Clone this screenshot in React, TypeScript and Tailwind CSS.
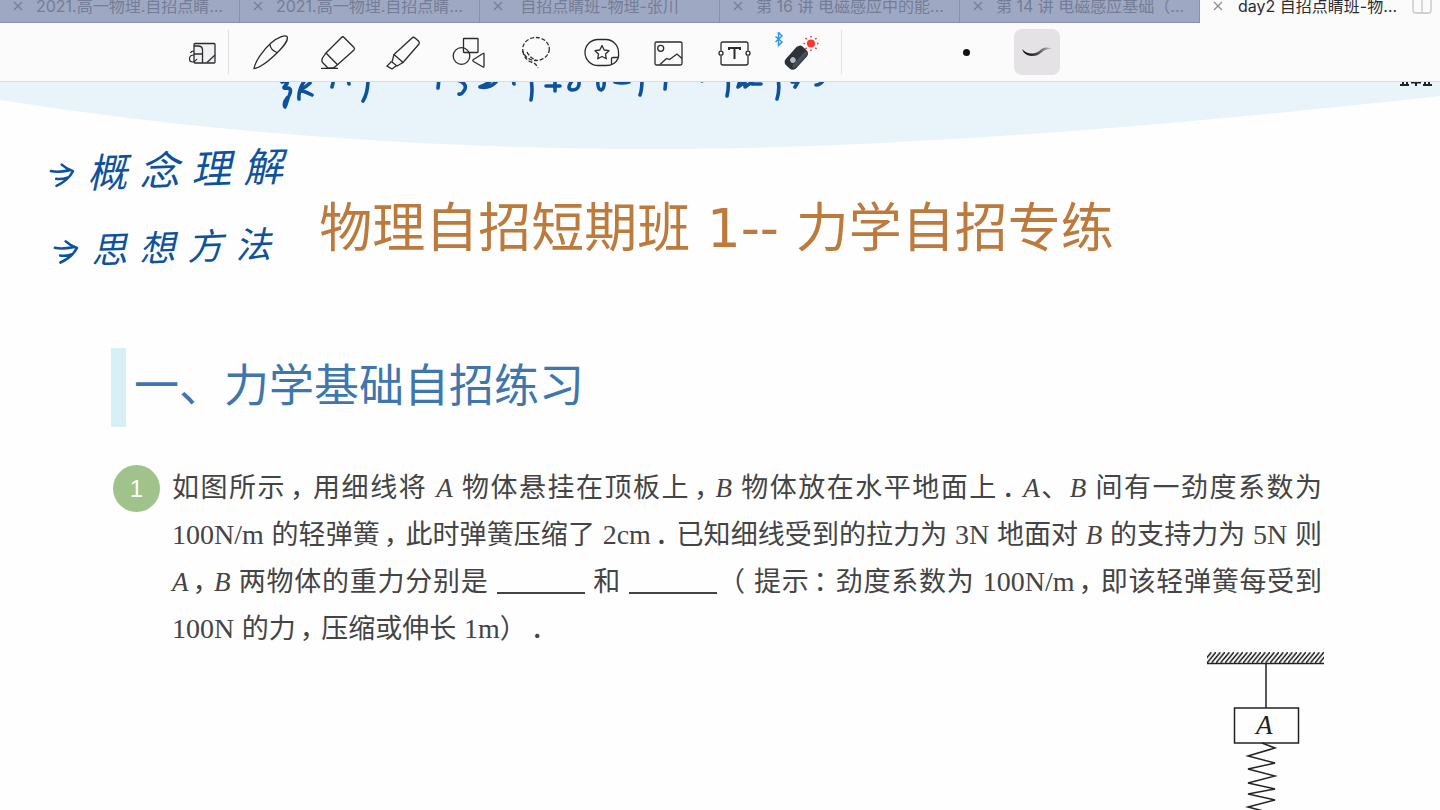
import React from 'react';

const CJK = "font-['Inter','Noto_Sans_CJK_SC',sans-serif]";

const TABS = [
  { title: '2021.高一物理.自招点睛…' },
  { title: '2021.高一物理.自招点睛…' },
  { title: '自招点睛班-物理-张川', short: true },
  { title: '第 16 讲 电磁感应中的能…' },
  { title: '第 14 讲 电磁感应基础（…' },
];

const CloseIcon = () => (
  <svg className="w-2.5 h-2.5" fill="none" stroke="currentColor" strokeWidth="1.2" viewBox="0 0 10 10"><path d="M1 1l8 8M9 1l-8 8" /></svg>
);

const TOOLS: { label: string; icon: React.ReactNode }[] = [
  {
    label: 'Pen',
    icon: <path d="M2 36.500C3 30 11 18 19 11C26 5 33 3 35 4.500C36.500 7 33 13 27 19C19 27 8 36 2 36.500ZM18 12.500Q18.500 18 25 20.500" />,
  },
  {
    label: 'Eraser',
    icon: <path d="M23.500 5.500Q24.700 4 26 5.500L36 15.500Q37 17 36 18L19.500 32.700L15.500 36H10L5 31Q3 29 4.500 26L8 21ZM8 21L19.500 32.700M3 36.400H20" />,
  },
  {
    label: 'Highlighter',
    icon: <path d="M28 6Q29.300 4.500 31 6L34.500 9Q36 10.500 35 12L19 30.500L10 22.500ZM10 22.500L8 30L13 34L19 30.500M7.500 29.500L3 34L8 37L12 34" />,
  },
  {
    label: 'Shapes',
    icon: (
      <>
        <rect x="13.500" y="6.500" width="14.500" height="14" rx="0.500" />
        <circle cx="11.500" cy="24" r="8.300" />
        <path d="M23.500 27.500L33 21.500Q34 21 34 22V34Q34 35.500 33 35L23.500 29.500Q22 28.500 23.500 27.500Z" />
      </>
    ),
  },
  {
    label: 'Lasso',
    icon: (
      <g strokeDasharray="4 1.800">
        <ellipse cx="20" cy="17" rx="13.300" ry="11.500" />
        <path d="M6.800 19Q8 27 15 30Q20 31 22 36M11 20Q14 26 20 28" />
      </g>
    ),
  },
  {
    label: 'Sticker',
    icon: (
      <>
        <path d="M16 7.500H24A13 13 0 0 1 36.500 20Q37 24 36 26.500Q33 33.500 24 33.500H16A13 13 0 0 1 16 7.500Z" />
        <path d="M36 25.500H31Q29.500 25.500 29.500 27V32" />
        <path d="M20 13.500L22.200 18L27 18.700L23.500 22L24.300 26.800L20 24.500L15.700 26.800L16.500 22L13 18.700L17.800 18Z" strokeLinejoin="round" />
      </>
    ),
  },
  {
    label: 'Image',
    icon: (
      <>
        <rect x="7" y="10" width="27" height="23" rx="1.500" />
        <circle cx="12.700" cy="16.300" r="3" />
        <path d="M12 32.500L18.500 26.500L21.500 27.500L29 22L34 26.500" />
      </>
    ),
  },
  {
    label: 'Text',
    icon: (
      <>
        <path d="M7 18.500V12Q7 10 9 10H32Q34 10 34 12V18.500M34 24V31Q34 33 32 33H9Q7 33 7 31V24" />
        <circle cx="7" cy="21.200" r="2" />
        <circle cx="34" cy="21.200" r="2" />
        <path d="M15 18V16H26V18M20.500 16V27" strokeWidth="2" />
      </>
    ),
  },
];

// Half-width marks centred in a full-width cell
const Mark = ({ children }: { children: React.ReactNode }) => (
  <span className="inline-block pl-1 pr-2 [font-feature-settings:'halt']">{children}</span>
);

const Blank = () => <span className="inline-block w-[88px] border-b-2 border-[#444] align-[-3px]" />;

const Latin = ({ children }: { children: React.ReactNode }) => (
  <span className="font-['Liberation_Serif',serif] text-[28px]">{children}</span>
);

const Var = ({ children }: { children: React.ReactNode }) => (
  <i className="font-['Liberation_Serif',serif]">{children}</i>
);

// Double-stroked arrow in front of each handwritten note
const NoteArrow = () => (
  <svg className="w-[26px] h-[26px] shrink-0" viewBox="0 0 26 26" fill="none" stroke="currentColor" strokeWidth="2.600" strokeLinecap="round" strokeLinejoin="round">
    <path d="M2 9Q9 11 20 9M7 17Q12 18 19 16M13 3Q17 7 24 10Q19 19 7 24" />
  </svg>
);

const Spring = () => (
  <svg className="w-[117px] h-[180px] shrink-0" viewBox="0 0 117 180" fill="none" stroke="#222" strokeWidth="1.500">
    <defs>
      <pattern id="hatch" width="4.500" height="11" patternUnits="userSpaceOnUse">
        <path d="M-4.500 11L4.500 0M0 11L9 0" strokeWidth="1.500" />
      </pattern>
    </defs>
    <rect width="117" height="11" fill="url(#hatch)" stroke="none" />
    <path d="M0 11.500H117M59 11V56" />
    <rect x="27.500" y="56" width="64" height="35" />
    <text x="49" y="82" fontSize="27" fontStyle="italic" fontFamily="Liberation Serif, serif" fill="#222" stroke="none">A</text>
    <path d="M55 91L68 96L41 104L68 111L41 117L68 124L41 131L68 137L41 142L68 148L41 155L68 162" />
  </svg>
);

const App: React.FC = () => {
  return (
    <div className={`h-screen overflow-hidden flex flex-col bg-[#fefefe] ${CJK}`}>
      {/* Document tabs */}
      <nav className="h-[34px] -mt-[11px] shrink-0 grid grid-cols-6 text-base bg-[#9fa8c2]">
        {TABS.map((tab, i) => (
          <div key={i} className="relative min-w-0 flex items-center border-r border-b border-[#8791af] text-[#747d97]">
            <button aria-label="Close tab" className="absolute left-[13px]"><CloseIcon /></button>
            <span className={`flex-1 truncate ${tab.short ? 'text-center' : 'pl-9'}`}>{tab.title}</span>
          </div>
        ))}
        <div className="relative min-w-0 flex items-center bg-[#fbfbfb] text-[#2c2c2e]">
          <button aria-label="Close tab" className="absolute left-[13px] text-[#8a8a8e]"><CloseIcon /></button>
          <span className="flex-1 truncate pl-[38px]">day2 自招点睛班-物…</span>
          <button aria-label="Split view" className="w-5 mr-2 text-[#c4c4c8]">
            <svg className="w-5 h-5" fill="none" stroke="currentColor" strokeWidth="1.300" viewBox="0 0 20 20"><rect x="1" y="1" width="18" height="16" rx="2.500" /><path d="M10 1v16" /></svg>
          </button>
        </div>
      </nav>

      {/* Tool bar */}
      <div className="relative z-10 h-[59px] shrink-0 flex items-center pl-[176px] bg-[#fbfbfb] border-b border-[#d5dde1] text-[#2b2b2f]">
        <button aria-label="Zoom window" className="w-[52px] flex justify-center">
          <svg className="w-10 h-10" fill="none" stroke="currentColor" strokeWidth="1.300" viewBox="0 0 40 40">
            <rect x="12" y="11.500" width="21" height="19.500" rx="1" fill="#f1f0f2" />
            <path d="M12 14H16Q20.500 14 20.500 18V31M12 22H20.500M25 30.500L33 23" />
            <path d="M8.500 21Q9 19 12 19M12 23Q7.500 23 7.500 27Q7.500 30 10.500 30Q13 30 15 27" strokeWidth="1.200" />
          </svg>
        </button>
        <div className="w-px h-11 mr-2.5 bg-[#e0e0e2]" />
        {TOOLS.map(tool => (
          <button key={tool.label} aria-label={tool.label} className="w-[66px] flex justify-center">
            <svg className="w-10 h-10" fill="none" stroke="currentColor" strokeWidth="1.300" viewBox="0 0 40 40">{tool.icon}</svg>
          </button>
        ))}
        <button aria-label="Laser pointer" className="w-[66px] flex justify-center">
          <svg className="w-[50px] h-10" viewBox="0 0 50 40" fill="none">
            <path d="M0.500 4.500L7 10L3.500 13.500V0.500L7 4L0.500 10" stroke="#2f96e8" strokeWidth="1.500" />
            <g transform="rotate(42 22 25)">
              <rect x="15" y="13.500" width="14" height="25" rx="4.500" fill="#2c323a" />
              <rect x="24" y="14.500" width="4" height="21" rx="2" fill="#454d57" />
              <circle cx="21" cy="30" r="2.800" fill="#b5b9bd" />
            </g>
            <circle cx="36" cy="11.500" r="4" fill="#f4392d" />
            <path d="M36 5.500V4M36 17.500V19M30 11.500H28.500M42 11.500H43.500M31.700 7.200L30.500 6M40.300 7.200L41.500 6M40.300 15.800L41.500 17M31.700 15.800L30.500 17" stroke="#f4392d" strokeWidth="1.500" />
          </svg>
        </button>
        <div className="w-px h-11 ml-2 bg-[#e0e0e2]" />
        <button aria-label="Dot" className="w-12 ml-[100px] flex justify-center"><span className="w-[7px] h-[7px] rounded-full bg-[#111]" /></button>
        <button aria-label="Brush stroke" className="w-[46px] h-[46px] ml-6 flex items-center justify-center rounded-lg bg-[#e5e2e5]">
          <svg className="w-8 h-4" viewBox="0 0 32 16" fill="none">
            <defs>
              <linearGradient id="stroke" x1="0" x2="1"><stop offset="0" stopColor="#000" /><stop offset="0.500" stopColor="#444" /><stop offset="1" stopColor="#ccc" /></linearGradient>
            </defs>
            <path d="M1 5Q5 9.500 11 9.500Q16 9.500 20 5.500Q24 2 31 5Q24 4.500 20.500 8.500Q16 12.500 10 12Q3 11 1 5Z" fill="url(#stroke)" />
          </svg>
        </button>
      </div>

      {/* Page */}
      <main className="relative flex-1 min-h-0 overflow-hidden pt-[115px] pl-[111px] pr-[118px]">
        <svg className="absolute inset-x-0 top-0 w-full h-[67px]" viewBox="0 82 1440 67" preserveAspectRatio="none">
          <path d="M0 82V100Q310 149 660 149Q960 149 1440 96V82Z" fill="#e8f4f9" />
        </svg>
        <svg className="absolute right-2 top-0 w-8 h-1" viewBox="0 0 32 4" stroke="#222" strokeWidth="2"><path d="M0 3H9M3 0V3M7 0V3M11 0.500H21M16 0V4M23 3H32M25 0V3M29 0V3" /></svg>

        {/* Ink marks running out from under the tool bar */}
        <svg className="absolute left-[260px] top-0 w-[600px] h-10" viewBox="0 6 600 40" fill="none" stroke="#0e529d" strokeWidth="3.600" strokeLinecap="round" strokeLinejoin="round">
          <path d="M22 6Q31 4 25 10Q22 13 28 12Q33 13 28 22Q26 29 25 31Q23 27 27 22M45 4Q38 14 39 23M50 7Q46 11 40 14Q46 16 52 19M74 3L72 11M88 3L89 8M108 3Q108 17 103 25" />
          <path d="M179 3L178 12M197 4Q207 7 205 13Q202 19 199 18M229 4Q234 5 220 11Q229 13 236 6M253 3L254 8M271 3Q273 14 271 24M286 10H300M295 4V15" />
          <path d="M312 5Q306 13 312 14Q320 14 319 5M338 3Q337 13 341 14Q345 13 344 3M355 6Q362 8 369 6M382 3Q382 14 380 19M406 3L405 13M442 3V5M468 3Q469 12 467 20M480 5L478 11L485 6V11L492 6M492 8H501M518 3Q520 14 517 23M532 6H538L535 11M556 9Q560 9 563 5" />
        </svg>

        {/* Handwritten notes */}
        <div className="absolute left-[49px] top-[64px] flex items-center gap-3 -rotate-2 text-[#0e529d] text-[40px] leading-[50px] italic">
          <NoteArrow />
          {'概念理解'.split('').map(c => <span key={c}>{c}</span>)}
        </div>
        <div className="absolute left-[53px] top-[141px] flex items-center gap-3 -rotate-2 text-[#0e529d] text-[36px] leading-[50px] italic">
          <NoteArrow />
          {'思想方法'.split('').map(c => <span key={c}>{c}</span>)}
        </div>

        <h1 className="mb-[87px] text-center text-[53px] leading-[64px] text-[#bd7a3d] font-['DejaVu_Sans','Noto_Sans_CJK_SC',sans-serif]">物理自招短期班 1-- 力学自招专练</h1>

        <h2 className="mb-[37px] flex items-center h-[79px] border-l-[15px] border-[#d9eff6] pl-2 pb-1 text-[45px] text-[#3f76ad]">一、力学基础自招练习</h2>

        <section className="flex gap-3 pl-0.5">
          <span className="w-[47px] h-[47px] mt-px shrink-0 flex items-center justify-center rounded-full bg-[#a0c28b] text-white text-2xl font-['Liberation_Sans',sans-serif]">1</span>
          <div className="flex-1 text-[27px] leading-[47px] text-[#444] whitespace-nowrap">
            <p className="h-[47px] [text-align-last:justify]">如图所示<Mark>，</Mark>用细线将 <Var>A</Var> 物体悬挂在顶板上<Mark>，</Mark><Var>B</Var> 物体放在水平地面上<Mark>．</Mark><Var>A</Var>、<Var>B</Var> 间有一劲度系数为</p>
            <p className="h-[47px] [text-align-last:justify]"><Latin>100N/m</Latin> 的轻弹簧<Mark>，</Mark>此时弹簧压缩了 <Latin>2cm</Latin><Mark>．</Mark>已知细线受到的拉力为 <Latin>3N</Latin> 地面对 <Var>B</Var> 的支持力为 <Latin>5N</Latin> 则</p>
            <p className="h-[47px] [text-align-last:justify]"><Var>A</Var><Mark>，</Mark><Var>B</Var> 两物体的重力分别是 <Blank /> 和 <Blank />（ 提示<Mark>：</Mark>劲度系数为 <Latin>100N/m</Latin><Mark>，</Mark>即该轻弹簧每受到</p>
            <p className="h-[47px]"><Latin>100N</Latin> 的力<Mark>，</Mark>压缩或伸长 <Latin>1m</Latin>）<Mark>．</Mark></p>
          </div>
        </section>

        <div className="flex justify-end -mr-0.5"><Spring /></div>
      </main>
    </div>
  );
};

export default App;
